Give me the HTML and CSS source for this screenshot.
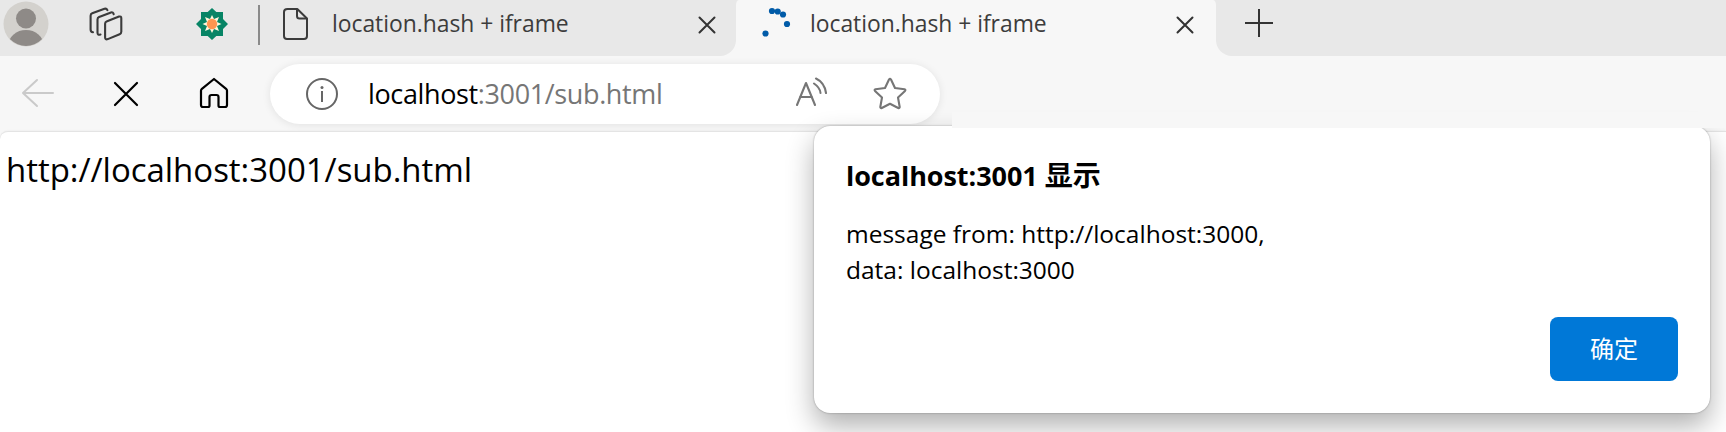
FILE: index.html
```html
<!DOCTYPE html>
<html lang="zh-CN">
<head>
<meta charset="utf-8">
<title>location.hash + iframe</title>
<link rel="stylesheet" href="styles.css">
</head>
<body>
<div class="window">
  <header class="tabstrip">
    <div class="strip-left">
      <svg class="avatar" width="46" height="46" viewBox="0 0 46 46"><defs><clipPath id="face"><circle cx="23" cy="23" r="22"/></clipPath></defs><circle cx="23" cy="23" r="22.5" fill="#d3d1cd"/><g clip-path="url(#face)" fill="#8e8a87"><circle cx="23" cy="17.5" r="10"/><ellipse cx="23" cy="44" rx="17.5" ry="15"/></g></svg>
      <svg class="workspaces" width="34" height="34" viewBox="0 0 34 34" fill="none" stroke="#3b3b3b" stroke-width="2.1" stroke-linejoin="round" stroke-linecap="round"><path d="M17.500 14.500 30 9.600q2.300-.6 2.300 1.600v13.500q0 1.800-1.700 2.500l-11.800 4.900q-2.700.9-2.700-1.600V16.800q0-1.800 1.400-2.300z"/><path d="M11.500 27.600Q8.500 28.400 8.500 25.800V12.400q0-1.700 1.600-2.400L22 5.400q2.200-.6 2.700 1.800"/><path d="M4 25.200Q1.600 25 1.600 22.500V8.800q0-1.900 1.600-2.500L15.500 1.800q2-.6 2.900 1.300"/></svg>
      <svg class="extension" width="32" height="32" viewBox="0 0 32 32"><path fill="#078465" d="M16 0l4.300 4H27v7l5 5-5 5v7h-6.700L16 32l-4.300-4H5v-7l-5-5 5-5V4h6.700z"/><path fill="#fff6dc" d="m16 7 2 4 5-2-2 5 4.500 2-4.500 2 2 5-5-2-2 4-2-4-5 2 2-5-4.500-2 4.500-2-2-5 5 2z"/><circle cx="16" cy="16" r="5.200" fill="#ff9551"/></svg>
      <span class="divider"></span>
      <svg class="page-icon" width="26" height="34" viewBox="0 0 26 34" fill="none" stroke="#3b3b3b" stroke-width="2" stroke-linejoin="round"><path d="M4.500 2h9.800L24 11.500V29q0 3-3 3H4q-3 0-3-3V5q0-3 3.500-3z"/><path d="M14 2v7q0 2.500 2.500 2.500H24"/></svg>
      <span class="tab-title">location.hash + iframe</span>
      <svg class="close" width="18" height="18" viewBox="0 0 18 18"><path d="m1.500 1.500 15 15m0-15-15 15" stroke="#333" stroke-width="2" stroke-linecap="round"/></svg>
    </div>
    <div class="tab-active">
      <svg class="spinner" width="30" height="30" viewBox="0 0 30 30" fill="#005ba8"><circle cx="10" cy="4" r="3.100"/><circle cx="15.700" cy="4.500" r="3.100"/><circle cx="21" cy="7.500" r="3.100"/><circle cx="25" cy="17" r="3.100"/><circle cx="3.500" cy="26.500" r="3.100"/></svg>
      <span class="tab-title">location.hash + iframe</span>
      <svg class="close" width="18" height="18" viewBox="0 0 18 18"><path d="m1.500 1.500 15 15m0-15-15 15" stroke="#333" stroke-width="2" stroke-linecap="round"/></svg>
    </div>
    <div class="strip-right">
      <svg width="28" height="28" viewBox="0 0 28 28"><path d="M14 0v28M0 14h28" stroke="#333" stroke-width="2"/></svg>
    </div>
  </header>
  <nav class="toolbar">
    <svg class="back" width="34" height="30" viewBox="0 0 34 30" fill="none" stroke="#cacaca" stroke-width="2" stroke-linecap="round" stroke-linejoin="round"><path d="M32 15H2M16 2 2 15l14 13"/></svg>
    <svg class="stop" width="26" height="26" viewBox="0 0 26 26"><path d="m2 2 22 22m0-22L2 24" stroke="#000" stroke-width="2.200" stroke-linecap="round"/></svg>
    <svg class="home" width="30" height="32" viewBox="0 0 30 32" fill="none" stroke="#000" stroke-width="2.200" stroke-linejoin="round"><path d="M15 2 2.600 12.200Q2 12.800 2 13.800V28q0 2 2 2h5q1.500 0 1.500-1.500V20q0-2 2-2h5q2 0 2 2v8.500Q19.500 30 21 30h5q2 0 2-2V13.800q0-1-.6-1.600z"/></svg>
    <div class="address">
      <svg class="info" width="34" height="34" viewBox="0 0 34 34"><circle cx="17" cy="17" r="15" fill="none" stroke="#666" stroke-width="2"/><circle cx="17" cy="10.500" r="1.500" fill="#666"/><path d="M17 14v11" stroke="#666" stroke-width="2"/></svg>
      <span class="url">localhost<span class="path">:3001/sub.html</span></span>
      <svg class="read" width="32" height="30" viewBox="0 0 32 30" fill="none" stroke="#767676" stroke-width="2.100" stroke-linecap="round" stroke-linejoin="round"><path d="M2 28 11 6l9 22M5 20h12M19 6.500q6 4 6.500 9.500M21 1.500q8.500 4 10 14.500"/></svg>
      <svg class="star" width="34" height="34" viewBox="0 0 34 34" fill="none" stroke="#767676" stroke-width="2.100" stroke-linejoin="round"><path d="M16 2.500q1-1.500 2 0l4 8.500 9.500 1.300q1.500.4.500 1.600L25 20.500l1.700 9.500q0 1.500-1.500 1L17 26.800 8.800 31q-1.500.5-1.500-1L9 20.500 2 13.900q-1-1.200.5-1.600L12 11z"/></svg>
    </div>
  </nav>
  <main class="page">http://localhost:3001/sub.html</main>
  <section class="dialog" role="alertdialog">
    <h1>localhost:3001 <span class="cjk">显示</span></h1>
    <p>message from: http://localhost:3000,<br>data: localhost:3000</p>
    <button type="button">确定</button>
  </section>
  <div class="toolbar-edge"></div>
</div>
</body>
</html>
```
FILE: styles.css
```css
* { box-sizing: border-box; }
body { margin: 0; font-family: "Open Sans", "Noto Sans CJK SC", sans-serif; }
svg { display: block; flex: none; }
.window { position: relative; width: 1726px; height: 432px; overflow: hidden; background: #f7f7f7; display: flex; flex-direction: column; }

.tabstrip { display: flex; height: 56px; flex: none; background: linear-gradient(#e8e8e8 20px, #f7f7f7 20px); }
.strip-left { width: 736px; display: flex; align-items: flex-start; background: #e8e8e8; border-bottom-right-radius: 16px; }
.avatar { margin: 1px 0 0 3px; }
.workspaces { margin: 7px 0 0 40px; }
.extension { margin: 8px 0 0 73px; }
.divider { width: 2px; height: 40px; margin: 5px 0 0 30px; background: #8a8a8a; }
.page-icon { margin: 7px 0 0 23px; }
.tab-title { width: 259px; margin: 4px 0 0 23px; font-size: 22.9px; letter-spacing: -.03px; line-height: 40px; color: #3c3c3c; white-space: nowrap; }
.close { margin: 16px 0 0 107px; }
.tab-active { width: 480px; display: flex; align-items: flex-start; background: #f7f7f7; border-radius: 3px 3px 0 0 / 5px 5px 0 0; }
.spinner { margin: 7px 0 0 26px; }
.tab-active .tab-title { margin-left: 18px; }
.strip-right { flex: 1; padding: 9px 0 0 29px; background: #e8e8e8; border-bottom-left-radius: 16px; }

.toolbar { display: flex; align-items: flex-start; height: 75px; flex: none; }
.back { margin: 22px 0 0 21px; }
.stop { margin: 25px 0 0 58px; }
.home { margin: 21px 0 0 60px; }
.address { display: flex; align-items: center; width: 670px; height: 60px; margin: 8px 0 0 41px; padding-left: 35px; border-radius: 30px; background: #fff; box-shadow: 0 1px 9px rgba(0,0,0,.09); }
.url { width: 423px; margin: -2px 0 0 29px; font-size: 27px; letter-spacing: -.37px; color: #000; white-space: nowrap; }
.path { color: #767676; }
.read { margin-left: 4px; margin-top: -5px; }
.star { margin-left: 46px; }

.page { flex: 1; padding: 14px 0 0 6px; background: #fff; border-top: 1px solid #e4e4e4; border-top-left-radius: 8px; font-size: 33px; letter-spacing: -.03px; line-height: 48px; box-shadow: 0 0 2px rgba(0,0,0,.08); }

.dialog { position: absolute; left: 814px; top: 126px; width: 896px; height: 287px; padding: 30px 32px 32px; display: flex; flex-direction: column; background: #fff; border-radius: 16px; box-shadow: 0 0 2px rgba(0,0,0,.35), 0 13px 28px rgba(0,0,0,.31); }
.dialog h1 { margin: 0; font-size: 27px; line-height: 40px; letter-spacing: -.05px; }
.cjk { font-size: 28px; line-height: 1; letter-spacing: 0; }
.dialog p { margin: 20px 0 0; font-size: 24.5px; line-height: 36px; }
.dialog button { align-self: flex-end; margin-top: 29px; width: 128px; height: 64px; border: 0; border-radius: 8px; background: #0078d7; color: #fff; font: 24px/62px "Noto Sans CJK SC", sans-serif; padding: 0 0 2px; }
.toolbar-edge { position: absolute; left: 952px; top: 112px; width: 774px; height: 16px; background: #f7f7f7; }
```
